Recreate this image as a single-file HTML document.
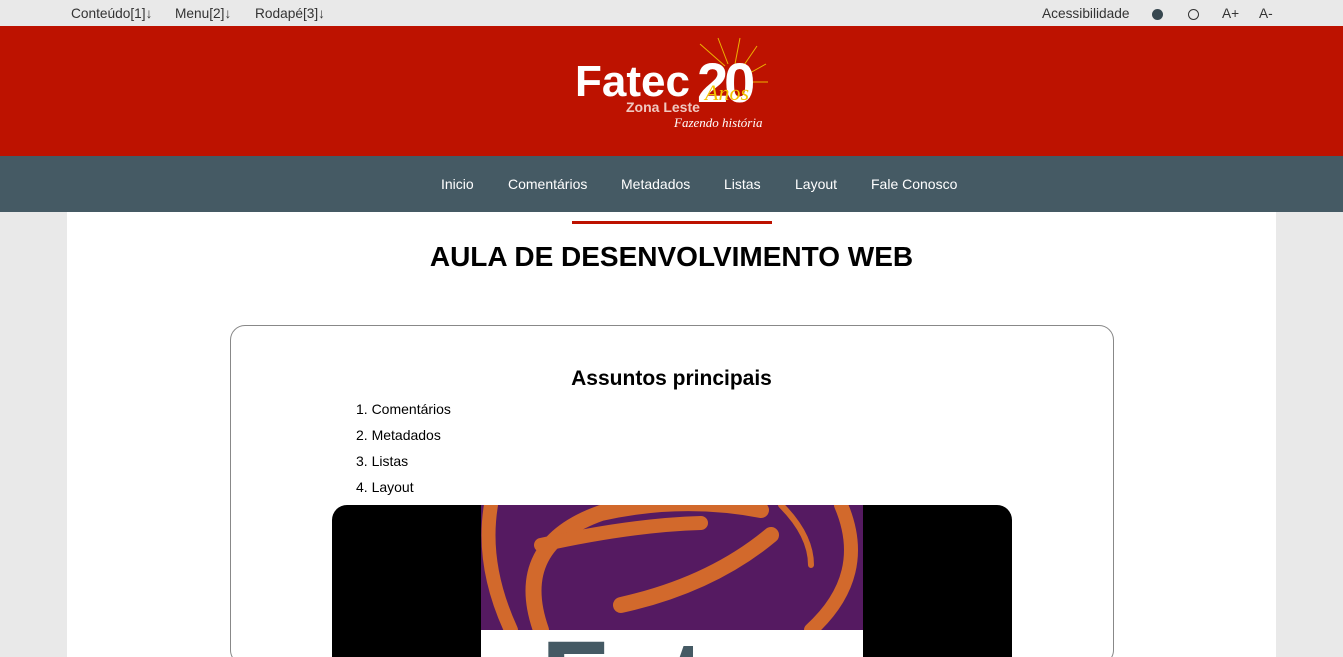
<!DOCTYPE html>
<html><head><meta charset="utf-8"><style>
*{margin:0;padding:0;box-sizing:border-box}
html,body{width:1343px;height:657px;overflow:hidden}
body{background:#e9e9e9;font-family:"Liberation Sans",Arial,sans-serif}
#w{position:relative;width:1343px;height:657px;overflow:hidden}
.top{position:absolute;top:0;left:0;right:0;height:26px;font-size:13.7px;color:#333}
.top span{position:absolute;top:6px}
.hdr{position:absolute;top:26px;left:0;right:0;height:130px;background:#bd1200}
.nav{position:absolute;top:156px;left:0;right:0;height:56px;background:#455a64;color:#fff;font-size:14px}
.nav span{position:absolute;top:20px}
.main{position:absolute;top:212px;left:67px;width:1209px;height:445px;background:#fff}
</style></head><body><div id="w">
<div class="top">
<span style="left:71px">Conteúdo[1]↓</span>
<span style="left:175px">Menu[2]↓</span>
<span style="left:255px">Rodapé[3]↓</span>
<span style="left:1042px">Acessibilidade</span>
<div style="position:absolute;left:1152px;top:9px;width:11px;height:11px;border-radius:50%;background:#37474f"></div>
<div style="position:absolute;left:1188px;top:9px;width:11px;height:11px;border-radius:50%;border:1.5px solid #333"></div>
<span style="left:1222px">A+</span>
<span style="left:1259px">A-</span>
</div>
<div class="hdr">
<svg width="1343" height="130" style="position:absolute;left:0;top:0">
<g stroke="#f3c300" stroke-width="1" opacity=".9">
<line x1="725" y1="40" x2="700" y2="18"/><line x1="728" y1="38" x2="718" y2="12"/><line x1="735" y1="38" x2="740" y2="12"/><line x1="742" y1="42" x2="757" y2="20"/><line x1="748" y1="48" x2="766" y2="38"/><line x1="752" y1="56" x2="768" y2="56"/>
</g>
<text x="575" y="70" font-family="Liberation Sans" font-weight="bold" font-size="44" fill="#fff">Fatec</text>
<text x="697" y="76" font-family="Liberation Sans" font-weight="bold" font-size="56" fill="#fff" letter-spacing="-4">20</text>
<text x="626" y="86" font-family="Liberation Sans" font-weight="bold" font-size="14" fill="#f0c8c0">Zona Leste</text>
<text x="705" y="74" font-family="Liberation Serif" font-style="italic" font-size="22" fill="#f3c300">Anos</text>
<text x="674" y="101" font-family="Liberation Serif" font-style="italic" font-size="13" fill="#fff">Fazendo história</text>
</svg>
</div>
<div class="nav">
<span style="left:441px">Inicio</span>
<span style="left:508px">Comentários</span>
<span style="left:621px">Metadados</span>
<span style="left:724px">Listas</span>
<span style="left:795px">Layout</span>
<span style="left:871px">Fale Conosco</span>
</div>
<div class="main"></div>
<div style="position:absolute;left:572px;top:221px;width:200px;height:3px;background:#bd1200"></div>
<div style="position:absolute;top:241px;left:0;width:1343px;text-align:center;font-size:28px;font-weight:bold;color:#000">AULA DE DESENVOLVIMENTO WEB</div>
<div style="position:absolute;left:230px;top:325px;width:884px;height:340px;border:1.5px solid #888;border-radius:15px"></div>
<div style="position:absolute;top:367px;left:0;width:1343px;text-align:center;font-size:21px;font-weight:bold">Assuntos principais</div>
<div style="position:absolute;left:356px;top:396px;font-size:14px;line-height:26px">1. Comentários<br>2. Metadados<br>3. Listas<br>4. Layout</div>
<div style="position:absolute;left:332px;top:505px;width:680px;height:152px;background:#000;border-radius:15px 15px 0 0;overflow:hidden">
<div style="position:absolute;left:149px;top:0;width:382px;height:125px;background:#551a61;overflow:hidden">
<svg width="382" height="125"><g fill="none" stroke="#d2692c" stroke-linecap="round">
<path d="M10 0 Q0 60 30 125" stroke-width="14"/><path d="M60 125 Q30 40 120 8 Q200 -10 280 5" stroke-width="16"/>
<path d="M60 40 Q150 20 220 18" stroke-width="14"/><path d="M140 100 Q230 80 290 30" stroke-width="16"/>
<path d="M360 0 Q390 70 330 125" stroke-width="14"/><path d="M300 0 Q330 30 330 60" stroke-width="6"/>
</g></svg></div>
<div style="position:absolute;left:149px;top:125px;width:382px;height:27px;background:#fff;overflow:hidden">
<div style="position:absolute;left:60px;top:-14px;font-size:110px;line-height:130px;font-weight:bold;color:#455a64">Fatec</div></div>
</div>
</div></body></html>
